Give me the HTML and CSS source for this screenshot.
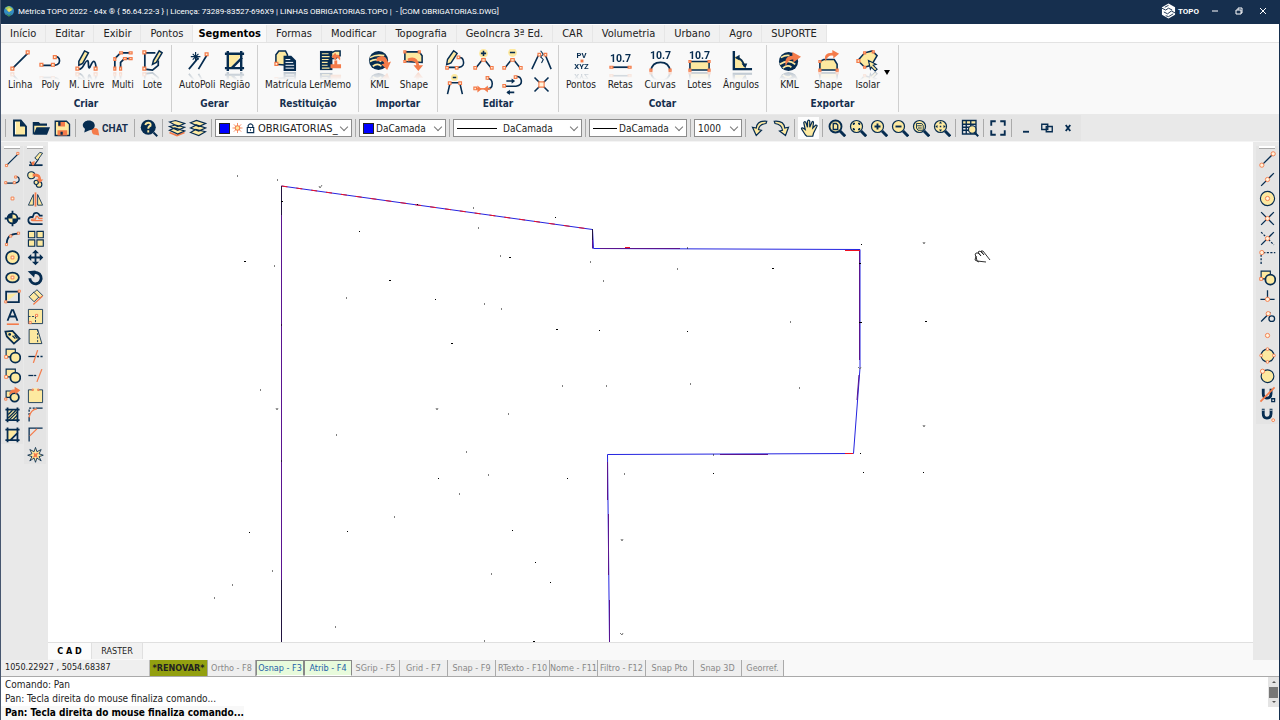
FILE: index.html
```html
<!DOCTYPE html>
<html lang="pt-BR">
<head>
    <meta charset="UTF-8">
    <meta name="viewport" content="width=device-width, initial-scale=1.0">
    <title>Métrica TOPO 2022</title>
    <link rel="stylesheet" href="styles.css">
</head>
<body>
    <!-- Biblioteca de ícones -->
    <svg class="sprite" aria-hidden="true">
        <!-- Criar -->
        <symbol id="linha" viewBox="0 0 24 24"><path class="n" d="M4 20L20 4"/><path class="h" d="M2 19h3v3h-3zM18 2h3v3h-3z"/></symbol>
        <symbol id="poly" viewBox="0 0 24 24"><path class="n" d="M3 17H16Q23 16 21 10Q20 8 17 8"/><path class="h" d="M1 15h3v3H1zM13 15h3v3h-3zM15 7h3v3h-3z"/></symbol>
        <symbol id="livre" viewBox="0 0 24 24"><path class="n" d="M2 20Q6 23 9 17Q14 8 14 16Q14 22 16 18Q21 7 22 20"/><path class="y" d="M4 13L10 2L14 4L8 15L4 17z"/><path class="h" d="M1 19h3v3H1zM20 19h3v3h-3z"/></symbol>
        <symbol id="multi" viewBox="0 0 24 24"><path class="n" d="M4 21V10L10 4H20M10 21V14L14 10H21"/><path class="h" d="M3 19h2v3H3zM3 9h2v3H3zM9 3h3v2H9zM19 3h3v2h-3zM9 19h2v3H9zM13 9h3v2h-3zM19 9h3v2h-3z"/></symbol>
        <symbol id="lote" viewBox="0 0 24 24"><path class="n" d="M15 4H4V21L12 22L18 17V12"/><path class="y" d="M13 12L19 2L22 4L16 14L12 16z"/><path class="h" d="M2 2h3v3H2zM2 19h3v3H2z"/></symbol>
        <!-- Gerar -->
        <symbol id="autopoli" viewBox="0 0 24 24"><path class="n" d="M3 21L13 9M13 21L22 6"/><path class="n thin" d="M10 3V13M5 8H15M7 5L13 11M13 5L7 11"/><path class="h" d="M20 4h3v3h-3z"/></symbol>
        <symbol id="regiao" viewBox="0 0 24 24"><path class="yf" d="M5 6H19L9 20H5z"/><path class="n fat" d="M5 2V23M19 2V23M2 5H22M2 20H22M20 9L9 20"/></symbol>
        <symbol id="hachura" viewBox="0 0 24 24"><path class="yf" d="M5 6h14v14H5z"/><path class="n" d="M6 12L12 6M6 17L17 6M7 20L19 8M12 20L19 13"/><path class="n fat" d="M5 2V23M19 2V23M2 5H22M2 20H22"/></symbol>
        <!-- Restituição -->
        <symbol id="matricula" viewBox="0 0 24 24"><path class="y" d="M2 16V6L5 2H12L14 6V17z"/><path class="h" d="M1 14h3v3H1z"/><path class="nf" d="M10 7H18L23 12V23H10z"/><path class="w" d="M12 11h5M12 14h8M12 17h9M12 20h9"/></symbol>
        <symbol id="lermemo" viewBox="0 0 24 24"><path class="nf" d="M1 2H14V22H1z"/><path class="ye thin" d="M3 5h7M3 8h8M3 11h7M3 14h6M3 17h6M3 20h8"/><path class="y" d="M13 10V4L17 2H22V7L17 10z"/><path class="of" d="M13 8L17 4L18 6Q23 5 22 12Q19 8 18 9V12zM12 16H16V12H19V16H23V20H12z"/></symbol>
        <!-- Importar / Exportar -->
        <symbol id="kml" viewBox="0 0 24 24"><circle class="nf" cx="11" cy="12" r="10"/><path class="ye" d="M2 9Q9 5 17 7M2 13Q8 9 14 13M5 18Q10 14 14 18"/><path class="of" d="M9 9Q18 4 21 14L24 13L20 22L14 16L17 15Q16 11 9 13z"/></symbol>
        <symbol id="shape" viewBox="0 0 24 24"><path class="y" d="M3 13V3H18L21 7V14z"/><path class="of" d="M6 10Q16 6 18 17H22L17 23L12 17H15Q14 11 6 13z"/><path class="h" d="M2 2h2v2H2zM2 12h2v2H2zM17 2h2v2h-2z"/></symbol>
        <symbol id="kmlout" viewBox="0 0 24 24"><circle class="nf" cx="11" cy="13" r="10"/><path class="ye" d="M3 9Q8 6 12 7M2 16Q11 10 18 16M5 20Q10 16 14 19"/><path class="of" d="M8 18Q6 7 15 7V3L24 8L16 14V11Q11 10 8 18z"/></symbol>
        <symbol id="shapeout" viewBox="0 0 24 24"><path class="y" d="M3 22V13L7 11H18L21 16V22z"/><path class="h" d="M2 12h2v2H2zM2 21h2v2H2zM20 21h2v2h-2z"/><path class="of" d="M9 13Q6 4 16 4V1L23 5L17 10V7Q11 6 9 13z"/></symbol>
        <symbol id="isolar" viewBox="0 0 24 24"><path class="y" d="M2 12L9 4L17 2L22 7L16 17L9 19z"/><path class="h" d="M1 11h3v3H1zM8 3h2v2H8zM17 2h2v2h-2zM8 18h2v2H8z"/><path class="y thin" d="M13 12L21 16L18 17L22 21L20 23L16 19L15 21z"/></symbol>
        <!-- Editar -->
        <symbol id="edlinha" viewBox="0 0 24 24"><path class="n" d="M4 21H17Q24 20 22 13Q21 9 16 10"/><path class="y" d="M4 12L11 2L15 5L8 16L3 18z"/><path class="h" d="M2 20h3v3H2zM15 8h3v3h-3zM13 20h3v3h-3z"/></symbol>
        <symbol id="vmais" viewBox="0 0 24 24"><circle class="yf" cx="12" cy="5" r="5"/><path class="n" d="M12 2V8M9 5H15M3 22L11 12M13 12L21 22"/><path class="h" d="M10 11h4v3h-4zM1 20h3v3H1zM20 20h3v3h-3z"/></symbol>
        <symbol id="vmenos" viewBox="0 0 24 24"><circle class="yf" cx="12" cy="4" r="5"/><path class="n" d="M9 4H15M3 22L11 12M13 12L21 22"/><path class="h" d="M10 11h4v3h-4zM1 20h3v3H1zM20 20h3v3h-3z"/></symbol>
        <symbol id="quebra" viewBox="0 0 24 24"><path class="n" d="M1 23L9 6M23 23L16 6"/><path class="n thin" d="M11 2L14 6L11 9L14 12L12 16"/><path class="h" d="M8 5h3v3H8zM15 5h3v3h-3z"/></symbol>
        <symbol id="vretas" viewBox="0 0 24 24"><circle class="yf" cx="12" cy="4" r="4"/><path class="n" d="M10 4H14M4 23L7 10H18L21 23"/><path class="h" d="M5 9h3v3H5zM17 9h3v3h-3z"/></symbol>
        <symbol id="juntar" viewBox="0 0 24 24"><path class="n" d="M14 17Q22 18 22 11Q22 5 16 5"/><path class="o" d="M2 17H20"/><path class="of" d="M5 13L10 17L5 21zM17 13L12 17L17 21z"/><path class="h" d="M1 15h3v3H1zM15 3h3v3h-3z"/></symbol>
        <symbol id="inverter" viewBox="0 0 24 24"><path class="n" d="M3 14H16Q23 13 22 7Q21 2 15 3M5 8H12M6 21H14"/><path class="nf" d="M11 5L15 8L11 11zM9 18L5 21L9 24z"/><path class="h" d="M1 12h3v3H1zM14 2h3v3h-3z"/></symbol>
        <symbol id="cruz" viewBox="0 0 24 24"><path class="n" d="M4 4L20 20M20 4L4 20"/><path class="h" d="M9 9h6v6H9z"/></symbol>
        <!-- Cotar -->
        <symbol id="cpontos" viewBox="0 0 24 24"><text class="it" x="12" y="9">PV</text><text class="it" x="12" y="21">XYZ</text><path class="of" d="M11 11h3v3h-3z"/></symbol>
        <symbol id="cretas" viewBox="0 0 24 24"><text class="num" x="12" y="14">10.7</text><path class="n" d="M3 19H22"/><path class="h" d="M1 18h3v2H1zM20 18h3v2h-3z"/></symbol>
        <symbol id="ccurvas" viewBox="0 0 24 24"><text class="num" x="12" y="10">10.7</text><path class="n" d="M2 23Q3 14 12 14Q21 14 22 23"/><path class="h" d="M1 21h2v2H1zM21 21h2v2h-2z"/></symbol>
        <symbol id="clotes" viewBox="0 0 24 24"><text class="num" x="12" y="10">10.7</text><path class="y" d="M2 13H22V22H2z"/><path class="h" d="M1 12h2v2H1zM21 12h2v2h-2zM1 21h2v2H1zM21 21h2v2h-2z"/></symbol>
        <symbol id="cangulos" viewBox="0 0 24 24"><path class="yf" d="M5 7Q16 10 17 20H5z"/><path class="n fat" d="M4 2V21H23"/><path class="n" d="M7 9Q13 10 15 18"/><path class="nf" d="M5 9L10 6V12zM12 15H18L16 20z"/></symbol>

        <!-- Barra padrão -->
        <symbol id="novo" viewBox="0 0 24 24"><path class="y fat" d="M4 2H13L20 10V22H4z"/><path class="nf" d="M12 2L20 10H12z"/><path class="w" d="M6 4V20"/></symbol>
        <symbol id="abrir" viewBox="0 0 24 24"><path class="yf" d="M3 8H18V18H3z"/><path class="nf" d="M1 4H9L11 6H20V9H3V19L1 21zM6 11H24L20 21H2z"/></symbol>
        <symbol id="salvar" viewBox="0 0 24 24"><path class="yf" d="M3 3H18L22 7V22H3z"/><path class="n" d="M3 3H18L22 7V22H3z"/><path class="of" d="M7 4H16V10H7zM6 15H19V22H6z"/><path class="nf" d="M7 3h3v6H7zM10 17h3v4h-3z"/></symbol>
        <symbol id="balao" viewBox="0 0 24 24"><path class="of" d="M13 13Q22 10 22 17L23 22L18 21Q12 21 13 13z"/><path class="nf" d="M9 2C19 2 20 14 10 15L3 18L4 13C-2 9 2 2 9 2z"/></symbol>
        <symbol id="ajuda" viewBox="0 0 24 24"><circle class="nf" cx="11" cy="11" r="10"/><path class="n fat" d="M18 18L23 23"/><path class="ye fat" d="M7 8Q8 5 11 5Q15 5 14 9Q11 10 11 13M11 15V18"/></symbol>
        <symbol id="camadas" viewBox="0 0 24 24"><path class="o fat" d="M2 18L12 22L22 18"/><path class="y" d="M2 15L9 12L22 16L13 20zM2 10L10 8L22 11L13 15zM2 4L10 2L22 6L13 10z"/></symbol>
        <symbol id="camadas2" viewBox="0 0 24 24"><path class="y" d="M2 18L9 14L22 17L13 22zM2 12L10 8L22 12L13 16zM2 5L10 2L22 6L13 10z"/></symbol>
        <symbol id="sol" viewBox="0 0 24 24"><path class="o" d="M12 1V23M1 12H23M4 4L20 20M20 4L4 20"/><circle class="of" cx="12" cy="12" r="6"/><circle class="yf" cx="12" cy="12" r="4"/></symbol>
        <symbol id="cadeado" viewBox="0 0 24 24"><path class="n fat" d="M7 11V6Q12 0 17 6V11M5 11H19V22H5z"/><path class="n" d="M12 14V18"/></symbol>
        <symbol id="desfazer" viewBox="0 0 24 24"><path class="y" d="M21 3Q8 2 7 12L2 11L7 22L14 15L10 14Q11 7 20 6z"/></symbol>
        <symbol id="refazer" viewBox="0 0 24 24"><path class="y" d="M3 3Q16 2 17 12L22 11L18 22L10 16L14 15Q13 7 4 6z"/></symbol>
        <symbol id="mao" viewBox="0 0 24 24"><path class="y" d="M7 21L2 13Q2 10 7 14L5 5Q6 2 8 5L10 11L10 3Q12 0 13 3L13 11L16 4Q18 2 18 5L17 12L21 8Q24 8 22 11L18 19L17 23H9z"/></symbol>
        <symbol id="zjanela" viewBox="0 0 24 24"><circle class="y fat" cx="10" cy="10" r="8"/><path class="n xfat" d="M16 16L23 23"/><path class="n" d="M7 6H11L13 8V14H7z"/></symbol>
        <symbol id="zextensao" viewBox="0 0 24 24"><circle class="y" cx="10" cy="10" r="8"/><path class="n xfat" d="M16 16L23 23"/><path class="n" d="M6 8V6H8M12 6H14V8M6 12V14H8M14 12V14H12"/></symbol>
        <symbol id="zmais" viewBox="0 0 24 24"><circle class="y" cx="10" cy="10" r="8"/><path class="n xfat" d="M16 16L23 23"/><path class="n fat" d="M6 10H14M10 6V14"/></symbol>
        <symbol id="zmenos" viewBox="0 0 24 24"><circle class="y" cx="10" cy="10" r="8"/><path class="n xfat" d="M16 16L23 23"/><path class="n fat" d="M6 10H14"/></symbol>
        <symbol id="zanterior" viewBox="0 0 24 24"><circle class="y" cx="10" cy="10" r="8"/><path class="n xfat" d="M16 16L23 23"/><path class="n thin" d="M6 6H13L15 9V15H8L6 12zM7 9H13M8 12H13"/></symbol>
        <symbol id="zcentro" viewBox="0 0 24 24"><circle class="y" cx="10" cy="10" r="8"/><path class="n xfat" d="M16 16L23 23"/><path class="nf" d="M10 3L12 6H8zM10 17L12 14H8zM3 10L6 8V12zM17 10L14 8V12zM9 9h2v2H9z"/></symbol>
        <symbol id="tabela" viewBox="0 0 24 24"><path class="w" d="M2 2H20V20H2z"/><path class="yf" d="M2 2H20V7H2z"/><path class="n" d="M2 2H20V20H2zM2 7H20M2 11H20M2 15H20M7 2V20M13 2V20"/><circle class="y" cx="15" cy="14" r="5"/><path class="n fat" d="M18 18L23 23"/></symbol>
        <symbol id="tela" viewBox="0 0 24 24"><path class="n fat" d="M3 9V3H9M15 3H21V9M3 15V21H9M21 15V21H15"/></symbol>
        <symbol id="min" viewBox="0 0 24 24"><path class="n fat" d="M8 17H16"/></symbol>
        <symbol id="rest" viewBox="0 0 24 24"><path class="n" d="M5 7H13V14H5zM11 10H19V17H11z"/></symbol>
        <symbol id="fechar" viewBox="0 0 24 24"><path class="n fat" d="M9 8L15 16M15 8L9 16"/></symbol>

        <!-- Desenho -->
        <symbol id="ponto" viewBox="0 0 24 24"><path class="h" d="M10 10h4v4h-4z"/></symbol>
        <symbol id="alvo" viewBox="0 0 24 24"><circle class="y fat" cx="12" cy="12" r="7"/><path class="nf" d="M12 5V12H5A7 7 0 0 1 12 5M12 19V12H19A7 7 0 0 1 12 19"/><path class="n fat" d="M12 1V5M12 19V23M1 12H5M19 12H23"/></symbol>
        <symbol id="arco" viewBox="0 0 24 24"><path class="n fat" d="M4 21Q3 5 20 5"/><path class="h" d="M2 19h3v3H2zM8 7h3v3H8zM19 3h3v3h-3z"/></symbol>
        <symbol id="circulo" viewBox="0 0 24 24"><circle class="y fat" cx="12" cy="12" r="9"/><path class="h" d="M10 10h4v4h-4z"/></symbol>
        <symbol id="elipse" viewBox="0 0 24 24"><ellipse class="y fat" cx="12" cy="12" rx="9" ry="7"/><path class="h" d="M10 10h4v4h-4z"/></symbol>
        <symbol id="retangulo" viewBox="0 0 24 24"><path class="n fat" d="M3 5H21V20H3z"/><path class="yf" d="M5 18V9L19 7L5 18z"/><path class="h" d="M1 18h3v3H1zM20 3h3v3h-3z"/></symbol>
        <symbol id="texto" viewBox="0 0 24 24"><path class="n fat" d="M5 18L11 3H13L19 18M8 12H16"/><path class="o fat" d="M4 23H21"/></symbol>
        <symbol id="etiqueta" viewBox="0 0 24 24"><path class="y fat" d="M2 5L12 4L22 15L14 22L4 12z"/><circle class="nf" cx="8" cy="9" r="2"/><path class="n" d="M12 11L16 15M15 10L19 15"/></symbol>
        <symbol id="bloco" viewBox="0 0 24 24"><path class="y" d="M3 3H16V14H3z"/><circle class="y fat" cx="16" cy="15" r="7"/><path class="h" d="M1 12h4v4H1z"/></symbol>
        <symbol id="blocoed" viewBox="0 0 24 24"><path class="y" d="M3 7H14V16H3z"/><circle class="y fat" cx="15" cy="16" r="6"/><path class="of" d="M7 13Q8 4 15 5V1L23 6L16 12V9Q11 9 7 13z"/><path class="h" d="M1 17h3v3H1z"/></symbol>
        <!-- Modificação -->
        <symbol id="apagar" viewBox="0 0 24 24"><path class="n fat" d="M3 20H22"/><path class="n" d="M4 15L7 19H11L16 12L12 9"/><path class="y thin" d="M11 10L18 2L22 3L15 13z"/><path class="of" d="M6 16L11 14L10 20H7z"/></symbol>
        <symbol id="copiar" viewBox="0 0 24 24"><circle class="y" cx="6" cy="6" r="5"/><circle class="y" cx="17" cy="19" r="4"/><circle class="y" cx="13" cy="16" r="3"/><path class="of" d="M8 4Q19 1 20 12H23L18 17L13 11H16Q16 7 8 8z"/></symbol>
        <symbol id="espelhar" viewBox="0 0 24 24"><path class="y thin" d="M9 5V20H2zM15 5V20H22z"/><path class="o fat" d="M12 2V22"/></symbol>
        <symbol id="offset" viewBox="0 0 24 24"><path class="n fat" d="M22 8H18Q15 2 10 5L8 10Q1 9 2 16Q3 20 8 20H22"/><path class="o" d="M22 15H8Q5 15 7 13H12L13 9H15L17 12H22"/></symbol>
        <symbol id="matriz" viewBox="0 0 24 24"><path class="y" d="M2 2h9v9H2zM14 2h9v9h-9zM2 14h9v9H2zM14 14h9v9h-9z"/></symbol>
        <symbol id="mover" viewBox="0 0 24 24"><path class="n fat" d="M12 3V21M3 12H21"/><path class="nf" d="M7 6L12 1L17 6zM7 18L12 23L17 18zM6 7L1 12L6 17zM18 7L23 12L18 17z"/></symbol>
        <symbol id="girar" viewBox="0 0 24 24"><path class="n xfat" d="M8 6A8 8 0 1 1 4 13"/><path class="nf" d="M1 3L12 2L10 12z"/></symbol>
        <symbol id="alinhar" viewBox="0 0 24 24"><path class="y thin" d="M3 11L10 4L17 11L10 18z"/><path class="y thin" d="M10 5L14 1L22 9L18 13z"/><path class="o" d="M9 22L22 10"/></symbol>
        <symbol id="escala" viewBox="0 0 24 24"><path class="y thin" d="M2 2H22V22H2z"/><path class="n thin dash" d="M2 12H12V22"/><path class="h" d="M3 19h3v3H3zM12 9h3v3h-3z"/></symbol>
        <symbol id="esticar" viewBox="0 0 24 24"><path class="y thin" d="M3 2H15L21 22H3z"/><path class="n thin dash" d="M15 2V22"/></symbol>
        <symbol id="aparar" viewBox="0 0 24 24"><path class="n" d="M2 12H12"/><path class="n dash" d="M14 12H23"/><path class="o" d="M9 21L15 3"/></symbol>
        <symbol id="estender" viewBox="0 0 24 24"><path class="n" d="M2 12H9"/><path class="n dash" d="M10 12H15"/><path class="o" d="M14 21L21 3"/></symbol>
        <symbol id="quebrar" viewBox="0 0 24 24"><path class="y thin" d="M2 4H22V22H2z"/><path class="yf" d="M8 2H16V8H8z"/><path class="h" d="M7 3h2v2H7zM15 3h2v2h-2z"/></symbol>
        <symbol id="filete" viewBox="0 0 24 24"><path class="n" d="M3 22V15M12 3H22"/><path class="n dash" d="M3 13V3H12"/><path class="o" d="M3 16Q5 5 14 4"/></symbol>
        <symbol id="chanfro" viewBox="0 0 24 24"><path class="n" d="M3 22V3H22"/><path class="o" d="M4 14L14 4"/></symbol>
        <symbol id="explodir" viewBox="0 0 24 24"><path class="y thin" d="M12 2L14 8L20 5L17 11L23 13L17 15L20 21L14 17L12 23L10 17L4 21L7 15L1 13L7 11L4 5L10 8z"/><path class="of" d="M9 9L12 11L16 9L14 13L15 17L12 15L8 17L10 13z"/></symbol>
        <!-- Osnap -->
        <symbol id="sfim" viewBox="0 0 24 24"><path class="n" d="M4 20L20 4"/><circle class="h" cx="4" cy="20" r="3"/><circle class="h" cx="20" cy="4" r="3"/></symbol>
        <symbol id="smeio" viewBox="0 0 24 24"><path class="n" d="M3 21L21 3"/><circle class="h" cx="12" cy="12" r="3"/></symbol>
        <symbol id="scentro" viewBox="0 0 24 24"><circle class="y" cx="12" cy="12" r="10"/><circle class="h" cx="12" cy="12" r="3"/></symbol>
        <symbol id="sinter" viewBox="0 0 24 24"><path class="n" d="M3 3L21 21M21 3L3 21"/><circle class="h" cx="12" cy="12" r="3"/></symbol>
        <symbol id="sapar" viewBox="0 0 24 24"><path class="n" d="M21 3L3 21"/><path class="n dash" d="M3 3L21 21"/><circle class="h" cx="12" cy="12" r="3"/></symbol>
        <symbol id="sext" viewBox="0 0 24 24"><path class="n dash" d="M6 5H23M3 8V23"/><circle class="h" cx="4" cy="5" r="3"/></symbol>
        <symbol id="sperp" viewBox="0 0 24 24"><path class="n" d="M2 16H22M12 3V16"/><circle class="h" cx="12" cy="16" r="3"/></symbol>
        <symbol id="stang" viewBox="0 0 24 24"><path class="n" d="M3 19L16 6"/><circle class="n" cx="18" cy="15" r="4"/><circle class="h" cx="13" cy="8" r="3"/></symbol>
        <symbol id="sno" viewBox="0 0 24 24"><circle class="h" cx="12" cy="12" r="3"/></symbol>
        <symbol id="squad" viewBox="0 0 24 24"><circle class="y" cx="12" cy="12" r="9"/><circle class="h" cx="12" cy="3" r="2"/><circle class="h" cx="12" cy="21" r="2"/><circle class="h" cx="3" cy="12" r="2"/><circle class="h" cx="21" cy="12" r="2"/></symbol>
        <symbol id="sprox" viewBox="0 0 24 24"><circle class="y" cx="12" cy="13" r="9"/><circle class="h" cx="5" cy="6" r="3"/></symbol>
        <symbol id="snao" viewBox="0 0 24 24"><path class="n xfat" d="M6 4V11Q6 17 11 17Q17 17 17 11V4"/><path class="n" d="M18 18h4v4h-4z"/><path class="o fat" d="M2 22L22 2"/></symbol>
        <symbol id="sima" viewBox="0 0 24 24"><path class="n xfat" d="M6 4V11Q6 17 11 17Q17 17 17 11V4"/><path class="w" d="M4 6H8M15 6H19"/><circle class="h" cx="20" cy="20" r="2"/></symbol>
    </svg>

    <!-- Barra de título -->
    <header class="titlebar">
        <svg class="app-icon" viewBox="0 0 12 12"><circle cx="6" cy="6" r="5" fill="#348cc4"/><path d="M2 3L6 1L10 4L6 7z" fill="#a7c957"/><path d="M4 5L6 3L9 5L6 7z" fill="#f3dc69"/><path d="M2 8L6 10L9 8L6 12z" fill="#3d8b54"/></svg>
        <h1>Métrica TOPO 2022 - 64x ® { 56.64.22-3 } | Licença: 73289-83527-696X9 | LINHAS OBRIGATORIAS.TOPO |&nbsp; - [COM OBRIGATORIAS.DWG]</h1>
        <div class="brand">
            <svg viewBox="0 0 16 18"><path d="M8 1L15 5V13L8 17L1 13V5z" fill="#fff"/><path d="M1 6L5 8L8 6L12 8M4 5L8 3M3 10L7 12L11 9L15 11M5 14L8 15L13 12" fill="none" stroke="#162f4e" stroke-width="1"/></svg>
            <span>TOPO</span>
        </div>
        <div class="window-buttons">
            <button aria-label="Minimizar"><svg viewBox="0 0 10 10"><path d="M2 5H8"/></svg></button>
            <button aria-label="Restaurar"><svg viewBox="0 0 10 10"><path d="M2 4H7V8H2zM4 4V2H8V7H7"/></svg></button>
            <button aria-label="Fechar"><svg viewBox="0 0 10 10"><path d="M2 2L8 8M8 2L2 8"/></svg></button>
        </div>
    </header>

    <!-- Abas -->
    <nav class="tabs">
        <button>Início</button>
        <button>Editar</button>
        <button>Exibir</button>
        <button>Pontos</button>
        <button class="active">Segmentos</button>
        <button>Formas</button>
        <button>Modificar</button>
        <button>Topografia</button>
        <button>GeoIncra 3ª Ed.</button>
        <button>CAR</button>
        <button>Volumetria</button>
        <button>Urbano</button>
        <button>Agro</button>
        <button>SUPORTE</button>
    </nav>

    <!-- Faixa de ferramentas -->
    <section class="ribbon">
        <div class="group criar">
            <div class="tools">
                <button><svg><use href="#linha"/></svg><span>Linha</span></button>
                <button><svg><use href="#poly"/></svg><span>Poly</span></button>
                <button><svg><use href="#livre"/></svg><span>M. Livre</span></button>
                <button><svg><use href="#multi"/></svg><span>Multi</span></button>
                <button><svg><use href="#lote"/></svg><span>Lote</span></button>
            </div>
            <h2>Criar</h2>
        </div>
        <div class="group gerar">
            <div class="tools">
                <button><svg><use href="#autopoli"/></svg><span>AutoPoli</span></button>
                <button><svg><use href="#regiao"/></svg><span>Região</span></button>
            </div>
            <h2>Gerar</h2>
        </div>
        <div class="group restituicao">
            <div class="tools">
                <button><svg><use href="#matricula"/></svg><span>Matrícula</span></button>
                <button><svg><use href="#lermemo"/></svg><span>LerMemo</span></button>
            </div>
            <h2>Restituição</h2>
        </div>
        <div class="group importar">
            <div class="tools">
                <button><svg><use href="#kml"/></svg><span>KML</span></button>
                <button><svg><use href="#shape"/></svg><span>Shape</span></button>
            </div>
            <h2>Importar</h2>
        </div>
        <div class="group editar">
            <div class="tools-grid">
                <button aria-label="Editar linha"><svg><use href="#edlinha"/></svg></button>
                <button aria-label="Inserir vértice"><svg><use href="#vmais"/></svg></button>
                <button aria-label="Remover vértice"><svg><use href="#vmenos"/></svg></button>
                <button aria-label="Quebrar"><svg><use href="#quebra"/></svg></button>
                <button aria-label="Remover trecho"><svg><use href="#vretas"/></svg></button>
                <button aria-label="Juntar"><svg><use href="#juntar"/></svg></button>
                <button aria-label="Inverter"><svg><use href="#inverter"/></svg></button>
                <button aria-label="Interseção"><svg><use href="#cruz"/></svg></button>
            </div>
            <h2>Editar</h2>
        </div>
        <div class="group cotar">
            <div class="tools">
                <button><svg><use href="#cpontos"/></svg><span>Pontos</span></button>
                <button><svg><use href="#cretas"/></svg><span>Retas</span></button>
                <button><svg><use href="#ccurvas"/></svg><span>Curvas</span></button>
                <button><svg><use href="#clotes"/></svg><span>Lotes</span></button>
                <button><svg><use href="#cangulos"/></svg><span>Ângulos</span></button>
            </div>
            <h2>Cotar</h2>
        </div>
        <div class="group exportar">
            <div class="tools">
                <button><svg><use href="#kmlout"/></svg><span>KML</span></button>
                <button><svg><use href="#shapeout"/></svg><span>Shape</span></button>
                <button><svg><use href="#isolar"/></svg><span>Isolar</span></button>
            </div>
            <button class="more" aria-label="Mais"></button>
            <h2>Exportar</h2>
        </div>
    </section>

    <!-- Barra padrão -->
    <section class="toolbar">
        <div class="bar">
            <i class="sep"></i>
            <button aria-label="Novo"><svg><use href="#novo"/></svg></button>
            <button aria-label="Abrir"><svg><use href="#abrir"/></svg></button>
            <button aria-label="Salvar"><svg><use href="#salvar"/></svg></button>
            <i class="sep"></i>
            <button class="chat"><svg><use href="#balao"/></svg>CHAT</button>
            <i class="sep"></i>
            <button aria-label="Ajuda"><svg><use href="#ajuda"/></svg></button>
            <i class="sep"></i>
            <button aria-label="Camadas"><svg><use href="#camadas"/></svg></button>
            <button aria-label="Estados"><svg><use href="#camadas2"/></svg></button>
            <i class="sep"></i>
            <div class="combo layer">
                <i class="swatch"></i>
                <svg><use href="#sol"/></svg>
                <svg><use href="#cadeado"/></svg>
                <select aria-label="Camada"><option>OBRIGATORIAS_</option></select>
            </div>
            <i class="sep"></i>
            <div class="combo color">
                <i class="swatch"></i>
                <select aria-label="Cor"><option>DaCamada</option></select>
            </div>
            <i class="sep"></i>
            <div class="combo linetype">
                <i class="line"></i>
                <select aria-label="Tipo de linha"><option>DaCamada</option></select>
            </div>
            <i class="sep"></i>
            <div class="combo weight">
                <i class="line"></i>
                <select aria-label="Espessura"><option>DaCamada</option></select>
            </div>
            <i class="sep"></i>
            <div class="combo scale">
                <select aria-label="Escala"><option>1000</option></select>
            </div>
            <i class="sep"></i>
            <button aria-label="Desfazer"><svg><use href="#desfazer"/></svg></button>
            <button aria-label="Refazer"><svg><use href="#refazer"/></svg></button>
            <i class="sep"></i>
            <button class="on" aria-label="Pan"><svg><use href="#mao"/></svg></button>
            <i class="sep"></i>
            <button aria-label="Zoom janela"><svg><use href="#zjanela"/></svg></button>
            <button aria-label="Zoom extensão"><svg><use href="#zextensao"/></svg></button>
            <button aria-label="Mais zoom"><svg><use href="#zmais"/></svg></button>
            <button aria-label="Menos zoom"><svg><use href="#zmenos"/></svg></button>
            <button aria-label="Zoom anterior"><svg><use href="#zanterior"/></svg></button>
            <button aria-label="Centralizar"><svg><use href="#zcentro"/></svg></button>
            <i class="sep"></i>
            <button aria-label="Localizar"><svg><use href="#tabela"/></svg></button>
            <i class="sep"></i>
            <button aria-label="Tela cheia"><svg><use href="#tela"/></svg></button>
            <i class="sep"></i>
            <button aria-label="Minimizar desenho"><svg><use href="#min"/></svg></button>
            <button aria-label="Restaurar desenho"><svg><use href="#rest"/></svg></button>
            <button aria-label="Fechar desenho"><svg><use href="#fechar"/></svg></button>
        </div>
    </section>

    <!-- Área de trabalho -->
    <main class="work">
        <aside class="side left">
            <div class="column draw">
                <button aria-label="Linha"><svg><use href="#linha"/></svg></button>
                <button aria-label="Polilinha"><svg><use href="#poly"/></svg></button>
                <button aria-label="Ponto"><svg><use href="#ponto"/></svg></button>
                <button aria-label="Inserir ponto"><svg><use href="#alvo"/></svg></button>
                <button aria-label="Arco"><svg><use href="#arco"/></svg></button>
                <button aria-label="Círculo"><svg><use href="#circulo"/></svg></button>
                <button aria-label="Elipse"><svg><use href="#elipse"/></svg></button>
                <button aria-label="Retângulo"><svg><use href="#retangulo"/></svg></button>
                <button aria-label="Texto"><svg><use href="#texto"/></svg></button>
                <button aria-label="Atributo"><svg><use href="#etiqueta"/></svg></button>
                <button aria-label="Criar bloco"><svg><use href="#bloco"/></svg></button>
                <button aria-label="Inserir bloco"><svg><use href="#bloco"/></svg></button>
                <button aria-label="Exportar bloco"><svg><use href="#blocoed"/></svg></button>
                <button aria-label="Hachura"><svg><use href="#hachura"/></svg></button>
                <button aria-label="Região"><svg><use href="#regiao"/></svg></button>
            </div>
            <div class="column modify">
                <button aria-label="Apagar"><svg><use href="#apagar"/></svg></button>
                <button aria-label="Copiar"><svg><use href="#copiar"/></svg></button>
                <button aria-label="Espelhar"><svg><use href="#espelhar"/></svg></button>
                <button aria-label="Offset"><svg><use href="#offset"/></svg></button>
                <button aria-label="Matriz"><svg><use href="#matriz"/></svg></button>
                <button aria-label="Mover"><svg><use href="#mover"/></svg></button>
                <button aria-label="Girar"><svg><use href="#girar"/></svg></button>
                <button aria-label="Alinhar"><svg><use href="#alinhar"/></svg></button>
                <button aria-label="Escala"><svg><use href="#escala"/></svg></button>
                <button aria-label="Esticar"><svg><use href="#esticar"/></svg></button>
                <button aria-label="Aparar"><svg><use href="#aparar"/></svg></button>
                <button aria-label="Estender"><svg><use href="#estender"/></svg></button>
                <button aria-label="Quebrar"><svg><use href="#quebrar"/></svg></button>
                <button aria-label="Filete"><svg><use href="#filete"/></svg></button>
                <button aria-label="Chanfro"><svg><use href="#chanfro"/></svg></button>
                <button aria-label="Explodir"><svg><use href="#explodir"/></svg></button>
            </div>
        </aside>

        <div class="view">
            <svg class="drawing">
                <g transform="translate(-48 -142)">
                    <!-- Perímetro -->
                    <path class="blue" d="M281.5 186L592.5 229.5L593.5 248.5L860 249.5V368L853.5 453.5L607.5 454.5L609.5 642"/>
                    <path class="red dashed" d="M281.5 186L592.5 229.5"/>
                    <path class="purple" d="M281.5 186V642M592.5 229V248.5M600 248.5H680M607.5 462V500M608.5 514V575M609.5 600V642M720 454.5H768M859.5 250V360M859 375L857 400"/>
                    <path class="dark" d="M281.5 186V215M281.5 580V642M592.5 229V240"/>
                    <path class="red" d="M625 247.5H630M845 250.5H860M845 453.5H853"/>
                    <!-- Pontos levantados -->
                    <path class="pts" d="M237 176h1M277 180h1M359 231.5h1M244 261.5h2M274 266h1M281 201.5h2M281 325h1M281 461h1M346 298h1M389 280.5h2M435 299.5h1M451 343.5h2M417 204.5h1M473 208h1M555 217.5h1M478 228h1M500 256h1M509 257.5h2M484 304h1M501 309h1M556 329.5h2M599 330.5h1M562 386h1M606 386h1M590 262h1M603 281h1M677 269h1M772 268.5h2M790 322h1M687 331.5h1M690 384h1M799 388h1M925 321.5h2M923 472.5h1M863 472.5h1M860 453.5h1M713 473.5h1M713 455h1M624 474h1M567 478.5h1M488 475h1M466 452h1M438 478.5h1M459 494h1M508 414h1M336 435h1M260 390h1M249 532.5h1M272 571h1M232 585h1M214 598h1M347 531.5h1M394 517h1M512 530.5h1M535 562.5h1M491 574h1M550 582.5h1M335 627h1M484 641h1M533 641.5h2M861 244.5h1M859 263.5h2M859 322.5h3M687 248h1"/>
                    <path class="marks" d="M276 408l1 2l1-2M436 408l1 2l1-2M621 539l1 2l1-2M620 633l2 2l1-2M923 242l1 2l1-2M923 425l1 2l1-2M319 186l1 2l2-3M858 367l2 2l1-2"/>
                </g>
                <!-- Cursor de pan -->
                <path class="cursor" d="M929 119l-1-5l-1-1l1-2l2 0l3 3l-3-4l2-1l4 4l-3-4l2 0l7 9M929 119l9 1M928 114l-1 4l4 2"/>
            </svg>
            <div class="sheets">
                <button class="active">C A D</button>
                <button>RASTER</button>
            </div>
        </div>

        <aside class="side right">
            <div class="column snap">
                <button aria-label="Fim"><svg><use href="#sfim"/></svg></button>
                <button aria-label="Meio"><svg><use href="#smeio"/></svg></button>
                <button aria-label="Centro"><svg><use href="#scentro"/></svg></button>
                <button aria-label="Interseção"><svg><use href="#sinter"/></svg></button>
                <button aria-label="Interseção aparente"><svg><use href="#sapar"/></svg></button>
                <button aria-label="Extensão"><svg><use href="#sext"/></svg></button>
                <button aria-label="Inserção"><svg><use href="#bloco"/></svg></button>
                <button aria-label="Perpendicular"><svg><use href="#sperp"/></svg></button>
                <button aria-label="Tangente"><svg><use href="#stang"/></svg></button>
                <button aria-label="Nó"><svg><use href="#sno"/></svg></button>
                <button aria-label="Quadrante"><svg><use href="#squad"/></svg></button>
                <button aria-label="Próximo"><svg><use href="#sprox"/></svg></button>
                <button aria-label="Sem osnap"><svg><use href="#snao"/></svg></button>
                <button aria-label="Configurar osnap"><svg><use href="#sima"/></svg></button>
            </div>
        </aside>
    </main>

    <!-- Barra de status -->
    <footer class="status">
        <output>1050.22927 , 5054.68387</output>
        <button class="renew">*RENOVAR*</button>
        <button>Ortho - F8</button>
        <button class="on">Osnap - F3</button>
        <button class="on">Atrib - F4</button>
        <button>SGrip - F5</button>
        <button>Grid - F7</button>
        <button>Snap - F9</button>
        <button class="wide">RTexto - F10</button>
        <button>Nome - F11</button>
        <button>Filtro - F12</button>
        <button>Snap Pto</button>
        <button>Snap 3D</button>
        <button class="narrow">Georref.</button>
    </footer>

    <!-- Linha de comando -->
    <section class="command">
        <div class="log">
            <p>Comando: Pan</p>
            <p>Pan: Tecla direita do mouse finaliza comando...</p>
            <p class="prompt">Pan: Tecla direita do mouse finaliza comando...</p>
        </div>
        <div class="scroll">
            <i class="up"></i>
            <i class="thumb"></i>
            <i class="down"></i>
        </div>
    </section>
</body>
</html>
```
FILE: styles.css
```css
* {
    box-sizing: border-box;
}
body {
    margin: 0;
    min-height: 100vh;
    display: flex;
    flex-direction: column;
    background: #fff;
    border-left: 1px solid #46566f;
    border-right: 1px solid #162f4e;
    color: #222;
    font-family: "DejaVu Sans Condensed", "Noto Sans", sans-serif;
    font-size: 11px;
    overflow: hidden;
}
button {
    padding: 0;
    border: 0;
    background: none;
    color: inherit;
    font: inherit;
    white-space: nowrap;
}
h1, h2, p {
    margin: 0;
}
.sprite {
    display: none;
}

/* Traços dos ícones */
.n { fill: none; stroke: #062c50; stroke-width: 1.8; }
.o { fill: none; stroke: #f47b4a; stroke-width: 1.8; }
.w { fill: none; stroke: #fff; stroke-width: 1; }
.ye { fill: none; stroke: #fde9a0; stroke-width: 1.8; }
.y { fill: #fde9a0; stroke: #062c50; stroke-width: 1.6; }
.h { fill: #fff3dc; stroke: #f47b4a; stroke-width: 1.3; }
.nf { fill: #062c50; }
.of { fill: #f47b4a; }
.yf { fill: #fde9a0; }
.fat { stroke-width: 2.5; }
.xfat { stroke-width: 4; }
.thin { stroke-width: 1.2; }
.dash { stroke-dasharray: 3 2; }
.it, .num {
    fill: #062c50;
    font-family: Roboto, sans-serif;
    font-weight: bold;
    text-anchor: middle;
}
.it { font-size: 8px; }
.num { font-size: 11px; }

/* Barra de título */
.titlebar {
    display: flex;
    align-items: center;
    height: 24px;
    padding: 0 4px 2px 2px;
    background: #162f4e;
    color: #fff;
}
.app-icon {
    width: 12px;
    height: 12px;
}
.titlebar h1 {
    flex: 1;
    margin-left: 3px;
    font-family: Roboto, sans-serif;
    font-size: 8px;
    font-weight: normal;
}
.brand {
    display: flex;
    align-items: center;
    gap: 2px;
    margin-right: 4px;
    font-family: Roboto, sans-serif;
    font-size: 8px;
    font-weight: bold;
}
.brand svg {
    width: 15px;
    height: 18px;
}
.window-buttons {
    display: flex;
}
.window-buttons button {
    display: grid;
    place-items: center;
    width: 24px;
    height: 20px;
}
.window-buttons svg {
    width: 10px;
    height: 10px;
    fill: none;
    stroke: #fff;
}

/* Abas */
.tabs {
    display: flex;
    height: 19px;
    padding-top: 1px;
    border-bottom: 1px solid #e3e3e3;
}
.tabs button {
    padding: 0 9px;
    background: #f1f1f1;
    border-right: 1px solid #e6e6e6;
    font-size: 11px;
    line-height: 18px;
}
.tabs .active {
    background: #f9f9f9;
    padding: 0 5px;
    color: #000;
    font-weight: bold;
}

/* Faixa de ferramentas */
.ribbon {
    display: flex;
    height: 72px;
    background: #f9f9f9;
    border-bottom: 1px solid #e9e9e9;
}
.group {
    position: relative;
    display: flex;
    flex-direction: column;
    justify-content: space-between;
    margin: 2px 0;
    padding: 4px 0 0;
    border-right: 1px solid #cfcfcf;
}
.criar { width: 171px; }
.gerar { width: 86px; }
.restituicao { width: 101px; }
.importar { width: 79px; }
.editar { width: 121px; }
.cotar { width: 208px; }
.exportar { width: 132px; }
.tools {
    display: flex;
    justify-content: space-between;
    padding: 0 7px;
}
.importar .tools {
    padding: 0 9px;
}
.exportar .tools {
    padding: 0 18px 0 11px;
}
.tools button {
    display: flex;
    flex-direction: column;
    align-items: center;
    gap: 6px;
}
.tools svg {
    width: 23px;
    height: 23px;
    -webkit-box-reflect: below -1px linear-gradient(transparent 60%, rgba(0, 0, 0, .3));
}
.tools span {
    font-size: 10px;
    line-height: 14px;
}
.tools-grid {
    display: grid;
    grid-template-columns: repeat(4, 1fr);
    justify-items: center;
    row-gap: 4px;
    padding: 0 2px;
}
.tools-grid button, .tools-grid svg {
    display: block;
    width: 21px;
    height: 21px;
}
.group h2 {
    color: #162f4e;
    font-size: 10px;
    line-height: 16px;
    text-align: center;
}
.more {
    position: absolute;
    top: 25px;
    right: 8px;
    border: 3px solid transparent;
    border-top: 5px solid #000;
}

/* Barra padrão */
.toolbar {
    height: 27px;
    background: #e9e9e9;
    border-bottom: 1px solid #f4f4f4;
}
.bar {
    display: flex;
    align-items: center;
    width: max-content;
    height: 26px;
    padding: 0 3px 0 1px;
    background: #e4e4e4;
}
.bar button {
    display: flex;
    align-items: center;
    justify-content: center;
    width: 21px;
    height: 22px;
}
.bar button svg {
    width: 18px;
    height: 18px;
}
.bar .on {
    background: #fdfdfd;
}
.bar .chat {
    width: 52px;
    gap: 2px;
    color: #162f4e;
    font-family: Roboto, sans-serif;
    font-size: 10px;
    font-weight: bold;
}
.sep {
    width: 1px;
    height: 18px;
    margin: 0 3px;
    background: #aaa;
}
.combo {
    position: relative;
    display: flex;
    align-items: center;
    gap: 2px;
    height: 18px;
    padding-left: 3px;
    background: #fff;
    border: 1px solid #8c8c8c;
}
.combo::after {
    content: "";
    position: absolute;
    top: 4px;
    right: 4px;
    width: 5px;
    height: 5px;
    border: solid #777;
    border-width: 0 1px 1px 0;
    transform: rotate(45deg);
    pointer-events: none;
}
.combo svg {
    width: 11px;
    height: 12px;
}
.combo select {
    flex: 1;
    min-width: 0;
    padding: 0 12px 0 0;
    border: 0;
    background: none;
    color: #222;
    font: inherit;
    font-size: 10px;
    appearance: none;
}
.combo.layer select {
    font-size: 11px;
}
.layer { width: 137px; }
.color { width: 87px; }
.linetype { width: 129px; }
.weight { width: 98px; }
.scale { width: 48px; }
.swatch {
    width: 11px;
    height: 11px;
    background: #00f;
    border: 1px solid #222;
}
.line {
    width: 40px;
    height: 1px;
    background: #000;
}
.linetype .line {
    margin-right: 4px;
}
.weight .line {
    width: 24px;
}

/* Área de trabalho */
.work {
    flex: 1;
    display: flex;
    min-height: 0;
    background: #e9e9e9;
}
.side {
    display: flex;
    align-items: flex-start;
    gap: 1px;
    padding-top: 4px;
}
.left {
    width: 47px;
}
.right {
    width: 26px;
    padding-left: 3px;
}
.column {
    position: relative;
    display: grid;
    grid-auto-rows: 1fr;
    width: 22px;
    padding-top: 4px;
    background: #e4e4e4;
}
/* Alça de arrastar */
.column::before {
    content: "";
    position: absolute;
    top: 0;
    left: 3px;
    right: 3px;
    height: 2px;
    background: #fff;
    border-bottom: 1px solid #aaa;
}
.column button {
    display: grid;
    place-items: center;
    min-height: 0;
}
.column svg {
    width: 17px;
    height: 17px;
}
.draw { height: 298px; }
.modify { height: 318px; }
.snap { height: 278px; }
.view {
    flex: 1;
    display: flex;
    flex-direction: column;
    min-width: 0;
}
.drawing {
    flex: 1;
    width: 100%;
    min-height: 0;
    background: #fff;
}
.drawing path {
    fill: none;
    stroke-width: 1;
}
.drawing .blue { stroke: #2424e0; }
.drawing .red { stroke: #f01020; }
.drawing .purple { stroke: #5a1490; }
.drawing .dark { stroke: #221440; }
.drawing .dashed { stroke-dasharray: 6 9; }
.drawing .pts { stroke: #000; }
.drawing .marks { stroke: #777; }
.drawing .cursor { stroke: #333; }
.sheets {
    display: flex;
    height: 18px;
    background: #f9f9f9;
    border-top: 1px solid #e0e0e0;
}
.sheets button {
    width: 51px;
    height: 16px;
    background: #f1f1f1;
    border-right: 1px solid #e0e0e0;
    font-size: 9px;
}
.sheets .active {
    width: 44px;
    background: #fcfcfc;
    color: #000;
    font-weight: bold;
}

/* Barra de status */
.status {
    display: flex;
    height: 17px;
    background: #f9f9f9;
    border-bottom: 1px solid #aaa;
    font-size: 9px;
}
.status output {
    width: 149px;
    padding-left: 4px;
    background: #efefef;
    border-right: 1px solid #bbb;
    color: #222;
    line-height: 15px;
}
.status button {
    width: 48px;
    background: #efefef;
    border-right: 1px solid #aaa;
    color: #888;
}
.status .renew {
    width: 58px;
    background: #93a010;
    color: #222;
    font-weight: bold;
}
.status .on {
    background: #e8fbdc;
    border: 1px solid #888;
    border-bottom-color: #fff;
    color: #1f62a8;
}
.status .wide {
    width: 54px;
}
.status .narrow {
    width: 42px;
}

/* Linha de comando */
.command {
    display: flex;
    justify-content: space-between;
    height: 43px;
    background: #fff;
}
.log {
    padding-top: 1px;
}
.log p {
    padding-left: 4px;
    font-size: 10px;
    line-height: 14px;
}
.log .prompt {
    background: #f8f8f8;
    color: #000;
    font-weight: bold;
}
.scroll {
    display: flex;
    flex-direction: column;
    align-items: center;
    justify-content: space-between;
    width: 11px;
    height: 30px;
    padding: 2px 0;
    background: #e4e4e4;
}
.up, .down {
    border: 2px solid transparent;
}
.up { border-bottom-color: #555; }
.down { border-top-color: #555; }
.thumb {
    width: 9px;
    height: 11px;
    background: #777;
}
```
